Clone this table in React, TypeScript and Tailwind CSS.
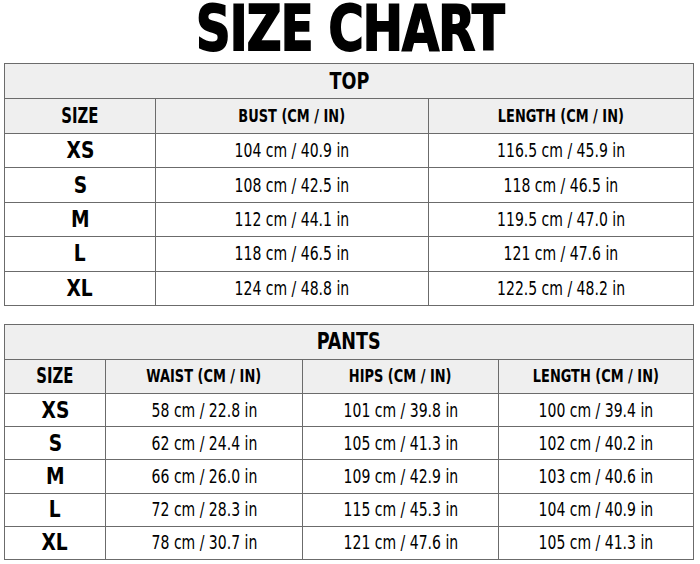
const top = [
  ["XS", "104 cm / 40.9 in", "116.5 cm / 45.9 in"],
  ["S", "108 cm / 42.5 in", "118 cm / 46.5 in"],
  ["M", "112 cm / 44.1 in", "119.5 cm / 47.0 in"],
  ["L", "118 cm / 46.5 in", "121 cm / 47.6 in"],
  ["XL", "124 cm / 48.8 in", "122.5 cm / 48.2 in"],
];

const pants = [
  ["XS", "58 cm / 22.8 in", "101 cm / 39.8 in", "100 cm / 39.4 in"],
  ["S", "62 cm / 24.4 in", "105 cm / 41.3 in", "102 cm / 40.2 in"],
  ["M", "66 cm / 26.0 in", "109 cm / 42.9 in", "103 cm / 40.6 in"],
  ["L", "72 cm / 28.3 in", "115 cm / 45.3 in", "104 cm / 40.9 in"],
  ["XL", "78 cm / 30.7 in", "121 cm / 47.6 in", "105 cm / 41.3 in"],
];

const cell = "border border-[#6b6b6b] text-center p-0 leading-none";

function Head({ children }: { children: string }) {
  return <span className="inline-block text-[18px] font-bold scale-x-[0.8] whitespace-nowrap">{children}</span>;
}

function Size({ children }: { children: string }) {
  return <span className="inline-block text-[23px] font-bold scale-x-[0.9]">{children}</span>;
}

function Val({ children }: { children: string }) {
  return <span className="inline-block text-[19px] scale-x-[0.82] whitespace-nowrap">{children}</span>;
}

export default function App() {
  return (
    <div className="w-[700px] h-[564px] bg-white text-black font-['DejaVu_Sans_Condensed','DejaVu_Sans',sans-serif] [font-stretch:condensed] overflow-hidden">
      <div className="h-[63px] flex items-start justify-center">
        <h1 className="inline-block text-[62px] font-bold leading-[58px] tracking-[-1px] scale-x-[0.86] [-webkit-text-stroke:1.8px_black]">
          SIZE CHART
        </h1>
      </div>

      <table className="ml-[4px] w-[689px] border-collapse table-fixed">
        <colgroup>
          <col className="w-[151px]" />
          <col className="w-[273px]" />
          <col className="w-[265px]" />
        </colgroup>
        <tbody>
          <tr className="h-[35px] bg-[#efefef]">
            <td colSpan={3} className={cell}>
              <span className="inline-block text-[23px] font-bold scale-x-[0.85]">TOP</span>
            </td>
          </tr>
          <tr className="h-[35px] bg-[#efefef]">
            <td className={cell}>
              <span className="inline-block text-[22px] font-bold scale-x-[0.75]">SIZE</span>
            </td>
            <td className={cell}><Head>BUST (CM / IN)</Head></td>
            <td className={cell}><Head>LENGTH (CM / IN)</Head></td>
          </tr>
          {top.map((r) => (
            <tr key={r[0]} className="h-[34.4px]">
              <td className={cell}><Size>{r[0]}</Size></td>
              <td className={cell}><Val>{r[1]}</Val></td>
              <td className={cell}><Val>{r[2]}</Val></td>
            </tr>
          ))}
        </tbody>
      </table>

      <table className="ml-[4px] mt-[18px] w-[689px] border-collapse table-fixed">
        <colgroup>
          <col className="w-[101px]" />
          <col className="w-[197px]" />
          <col className="w-[196px]" />
          <col className="w-[195px]" />
        </colgroup>
        <tbody>
          <tr className="h-[35px] bg-[#efefef]">
            <td colSpan={4} className={cell}>
              <span className="inline-block text-[23px] font-bold scale-x-[0.85]">PANTS</span>
            </td>
          </tr>
          <tr className="h-[34px] bg-[#efefef]">
            <td className={cell}>
              <span className="inline-block text-[22px] font-bold scale-x-[0.75]">SIZE</span>
            </td>
            <td className={cell}><Head>WAIST (CM / IN)</Head></td>
            <td className={cell}><Head>HIPS (CM / IN)</Head></td>
            <td className={cell}><Head>LENGTH (CM / IN)</Head></td>
          </tr>
          {pants.map((r) => (
            <tr key={r[0]} className="h-[33.2px]">
              <td className={cell}><Size>{r[0]}</Size></td>
              <td className={cell}><Val>{r[1]}</Val></td>
              <td className={cell}><Val>{r[2]}</Val></td>
              <td className={cell}><Val>{r[3]}</Val></td>
            </tr>
          ))}
        </tbody>
      </table>
    </div>
  );
}
